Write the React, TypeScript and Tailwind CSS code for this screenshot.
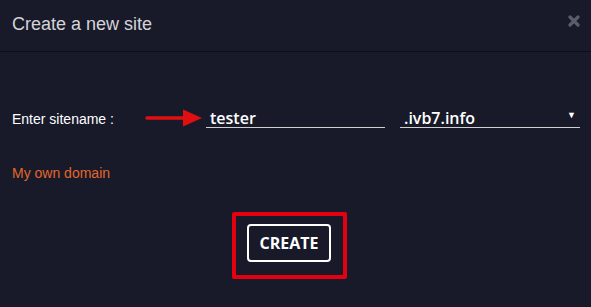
import React from "react";

export default function App() {
  return (
    <div className="w-[591px] h-[307px] bg-[#181a2a] overflow-hidden" style={{ fontFamily: '"Liberation Sans", Arial, sans-serif' }}>
      <div className="h-[52px] border-b border-[#0e0f1a] flex items-center justify-between pl-3 pr-[11px]">
        <span className="text-[18px] text-[#d4d4d8] pb-[3px]">Create a new site</span>
        <svg width="12" height="12" viewBox="0 0 12 12" className="mb-[10px]">
          <path d="M2 2 L10 10 M10 2 L2 10" stroke="#5a5c6a" strokeWidth="3.2" strokeLinecap="round" />
        </svg>
      </div>
      <div className="pl-3 pr-[11px] pt-[52px]">
        <div className="flex items-end h-[24px]">
          <span className="text-[14px] leading-[16px] text-white w-[133px] pb-[1px]">Enter sitename :</span>
          <svg width="58" height="18" viewBox="0 0 58 18" className="mr-[3px] mb-[1px]">
            <path d="M2 9 H42" stroke="#e01010" strokeWidth="3.5" strokeLinecap="round" />
            <path d="M38 0.5 L57 9 L38 17.5 Z" fill="#e01010" />
          </svg>
          <div className="w-[179px] h-[24px] border-b border-[#d0d0d0] flex items-end">
            <span className="text-[16px] font-semibold text-white leading-[18px] pl-[4px]" style={{ fontFamily: '"Open Sans", sans-serif' }}>tester</span>
          </div>
          <div className="w-[180px] ml-[15px] h-[24px] border-b border-[#d0d0d0] flex items-end justify-between">
            <span className="text-[16px] font-semibold text-white leading-[18px] pl-[4px]" style={{ fontFamily: '"Open Sans", sans-serif' }}>.ivb7.info</span>
            <span className="text-[9px] text-white pr-[4px] pb-[5px]">▼</span>
          </div>
        </div>
        <div className="mt-[37px] text-[14px] leading-[16px] text-[#e3662c]">My own domain</div>
        <div className="flex mt-[31px] pl-[220px]">
          <div className="border-4 border-[#e3000f] rounded-[2px] pl-[11px] pt-[8px] w-[115px] h-[67px]">
            <div className="border-2 border-white rounded-[4px] w-[84px] h-[38px] flex items-center justify-center">
              <span className="text-[16px] font-bold text-white" style={{ fontFamily: '"Open Sans", sans-serif' }}>CREATE</span>
            </div>
          </div>
        </div>
      </div>
    </div>
  );
}
